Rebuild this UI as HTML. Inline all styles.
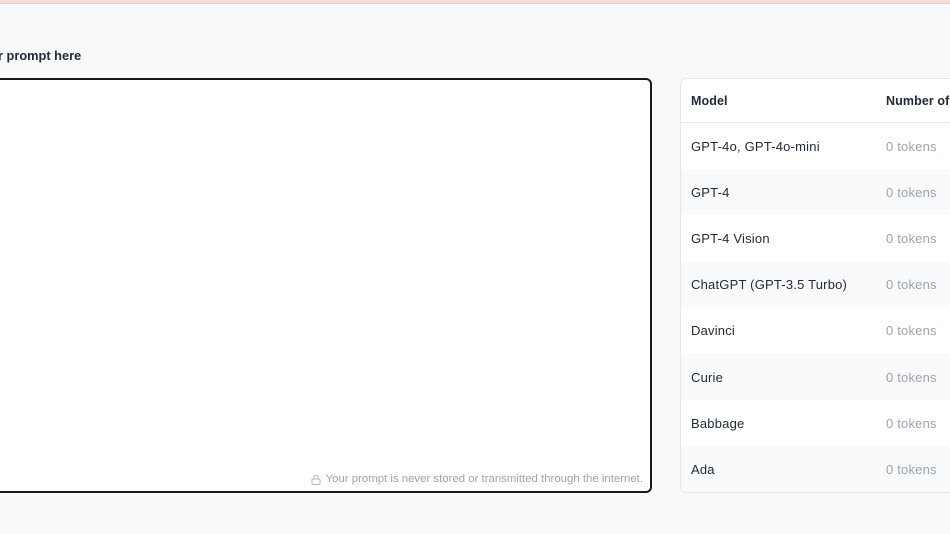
<!DOCTYPE html>
<html><head><style>
*{margin:0;padding:0;box-sizing:border-box}
body{width:950px;height:534px;overflow:hidden;background:#f8f9fb;font-family:"Liberation Sans",sans-serif;position:relative}
.top{position:absolute;left:0;top:0;width:950px;height:4px;background:#f3dcd6;border-bottom:1px solid #ecc9c1}
.lbl{position:absolute;left:-2px;top:48px;font-size:12.8px;font-weight:bold;color:#1f2937}
.ta{position:absolute;left:-20px;top:78px;width:672px;height:415px;background:#fff;border:2px solid #1a1a1a;border-radius:6px}
.note{position:absolute;right:7px;bottom:6px;font-size:11.4px;color:#9ca3af;display:flex;align-items:center;gap:5px}
.tbl{position:absolute;left:680px;top:78px;width:300px;height:415px;background:#fff;border:1px solid #e5e7eb;border-radius:6px;overflow:hidden}
.row{height:46.2px;display:flex;align-items:center;font-size:13px;color:#1f2937;letter-spacing:0.2px}
.row.h{height:44px;font-weight:bold;border-bottom:1px solid #e5e7eb;font-size:12.5px;letter-spacing:0.1px}
.row:nth-child(odd):not(.h){background:#f9fafb}
.c1{width:205px;padding-left:10px}
.c2{color:#9ca3af}
.h .c2{color:#1f2937}
</style></head><body>
<div class="top"></div>
<div class="lbl">r prompt here</div>
<div class="ta"><div class="note"><svg width="10" height="11" viewBox="0 0 10 11"><rect x="1" y="5" width="8" height="5.5" rx="1" fill="none" stroke="#b0b6bf"/><path d="M3 5V3.2a2 2 0 0 1 4 0V5" fill="none" stroke="#b0b6bf"/></svg>Your prompt is never stored or transmitted through the internet.</div></div>
<div class="tbl">
<div class="row h"><div class="c1">Model</div><div class="c2">Number of</div></div>
<div class="row"><div class="c1">GPT-4o, GPT-4o-mini</div><div class="c2">0 tokens</div></div>
<div class="row"><div class="c1">GPT-4</div><div class="c2">0 tokens</div></div>
<div class="row"><div class="c1">GPT-4 Vision</div><div class="c2">0 tokens</div></div>
<div class="row"><div class="c1">ChatGPT (GPT-3.5 Turbo)</div><div class="c2">0 tokens</div></div>
<div class="row"><div class="c1">Davinci</div><div class="c2">0 tokens</div></div>
<div class="row"><div class="c1">Curie</div><div class="c2">0 tokens</div></div>
<div class="row"><div class="c1">Babbage</div><div class="c2">0 tokens</div></div>
<div class="row"><div class="c1">Ada</div><div class="c2">0 tokens</div></div>
</div>
</body></html>
